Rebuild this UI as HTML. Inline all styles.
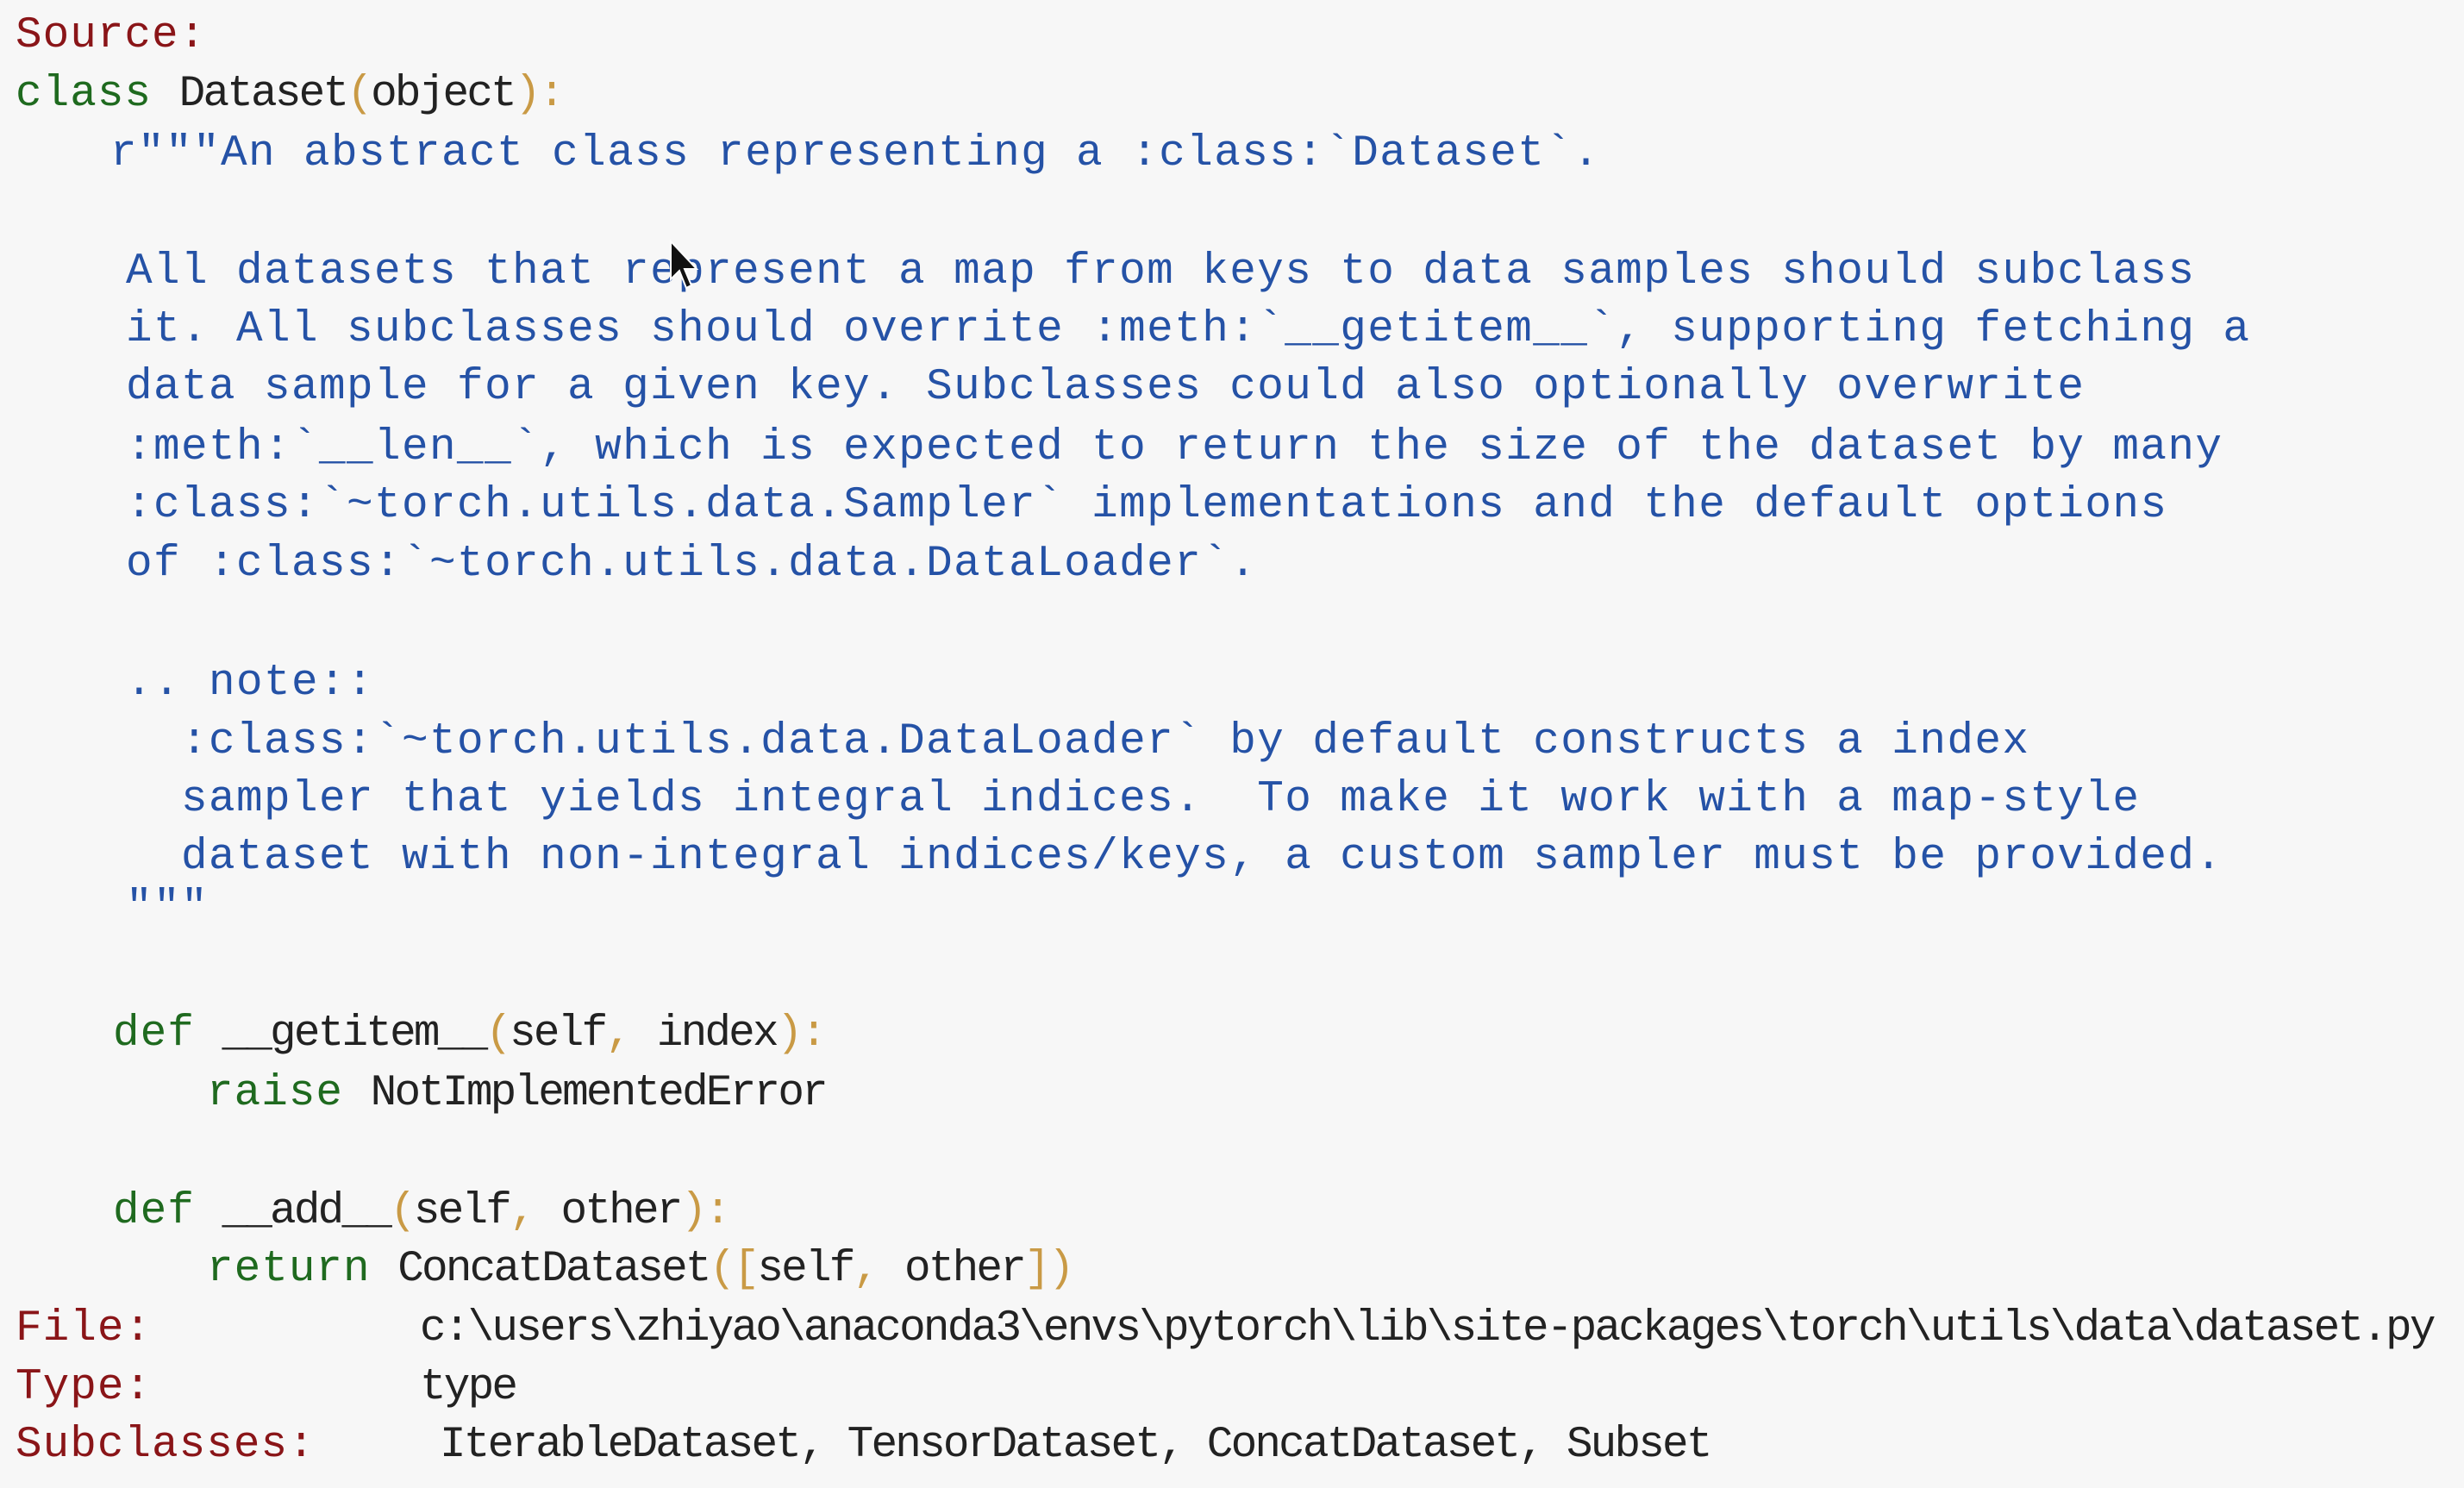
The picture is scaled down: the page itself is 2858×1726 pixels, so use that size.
<!DOCTYPE html>
<html><head><meta charset="utf-8"><style>
html,body{margin:0;padding:0;background:#f7f7f7;width:2858px;height:1726px;overflow:hidden}
.l{position:absolute;white-space:pre;font-family:"Liberation Mono",monospace;font-size:51px;line-height:68px;height:68px;letter-spacing:1px}
.r{color:#8a1518}
.g{color:#1f6a1f}
.b{color:#2552a6;letter-spacing:1.4px}
.k{color:#222;letter-spacing:-2.8px}
.o{color:#c99a45;letter-spacing:-2.8px}
</style></head><body>
<div class="l r" style="left:18px;top:8px">Source:</div>
<div class="l" style="left:18px;top:76px"><span class="g">class</span> <span class="k">Dataset</span><span class="o">(</span><span class="k">object</span><span class="o">):</span></div>
<div class="l b" style="left:128px;top:145px">r"""An abstract class representing a :class:`Dataset`.</div>
<div class="l b" style="left:146px;top:282px">All datasets that represent a map from keys to data samples should subclass</div>
<div class="l b" style="left:146px;top:349px">it. All subclasses should overrite :meth:`__getitem__`, supporting fetching a</div>
<div class="l b" style="left:146px;top:416px">data sample for a given key. Subclasses could also optionally overwrite</div>
<div class="l b" style="left:146px;top:486px">:meth:`__len__`, which is expected to return the size of the dataset by many</div>
<div class="l b" style="left:146px;top:553px">:class:`~torch.utils.data.Sampler` implementations and the default options</div>
<div class="l b" style="left:146px;top:621px">of :class:`~torch.utils.data.DataLoader`.</div>
<div class="l b" style="left:146px;top:759px">.. note::</div>
<div class="l b" style="left:210px;top:827px">:class:`~torch.utils.data.DataLoader` by default constructs a index</div>
<div class="l b" style="left:210px;top:894px">sampler that yields integral indices.  To make it work with a map-style</div>
<div class="l b" style="left:210px;top:961px">dataset with non-integral indices/keys, a custom sampler must be provided.</div>
<div class="l b" style="left:146px;top:1020px">"""</div>
<div class="l" style="left:131px;top:1166px"><span class="g">def</span> <span class="k">__getitem__</span><span class="o">(</span><span class="k">self</span><span class="o">,</span> <span class="k">index</span><span class="o">):</span></div>
<div class="l" style="left:240px;top:1235px"><span class="g">raise</span> <span class="k">NotImplementedError</span></div>
<div class="l" style="left:131px;top:1372px"><span class="g">def</span> <span class="k">__add__</span><span class="o">(</span><span class="k">self</span><span class="o">,</span> <span class="k">other</span><span class="o">):</span></div>
<div class="l" style="left:240px;top:1439px"><span class="g">return</span> <span class="k">ConcatDataset</span><span class="o">([</span><span class="k">self</span><span class="o">,</span> <span class="k">other</span><span class="o">])</span></div>
<div class="l r" style="left:18px;top:1508px">File:</div>
<div class="l k" style="left:487px;top:1508px">c:\users\zhiyao\anaconda3\envs\pytorch\lib\site-packages\torch\utils\data\dataset.py</div>
<div class="l r" style="left:18px;top:1576px">Type:</div>
<div class="l k" style="left:487px;top:1576px">type</div>
<div class="l r" style="left:18px;top:1643px">Subclasses:</div>
<div class="l k" style="left:510px;top:1643px">IterableDataset, TensorDataset, ConcatDataset, Subset</div>
<svg style="position:absolute;left:776px;top:278px" width="40" height="70" viewBox="0 0 40 70"><path d="M2 2 L2 46 L12 36 L20 56 L26 53 L18 34 L32 34 Z" fill="#111" stroke="#fff" stroke-width="2"/></svg>
</body></html>
